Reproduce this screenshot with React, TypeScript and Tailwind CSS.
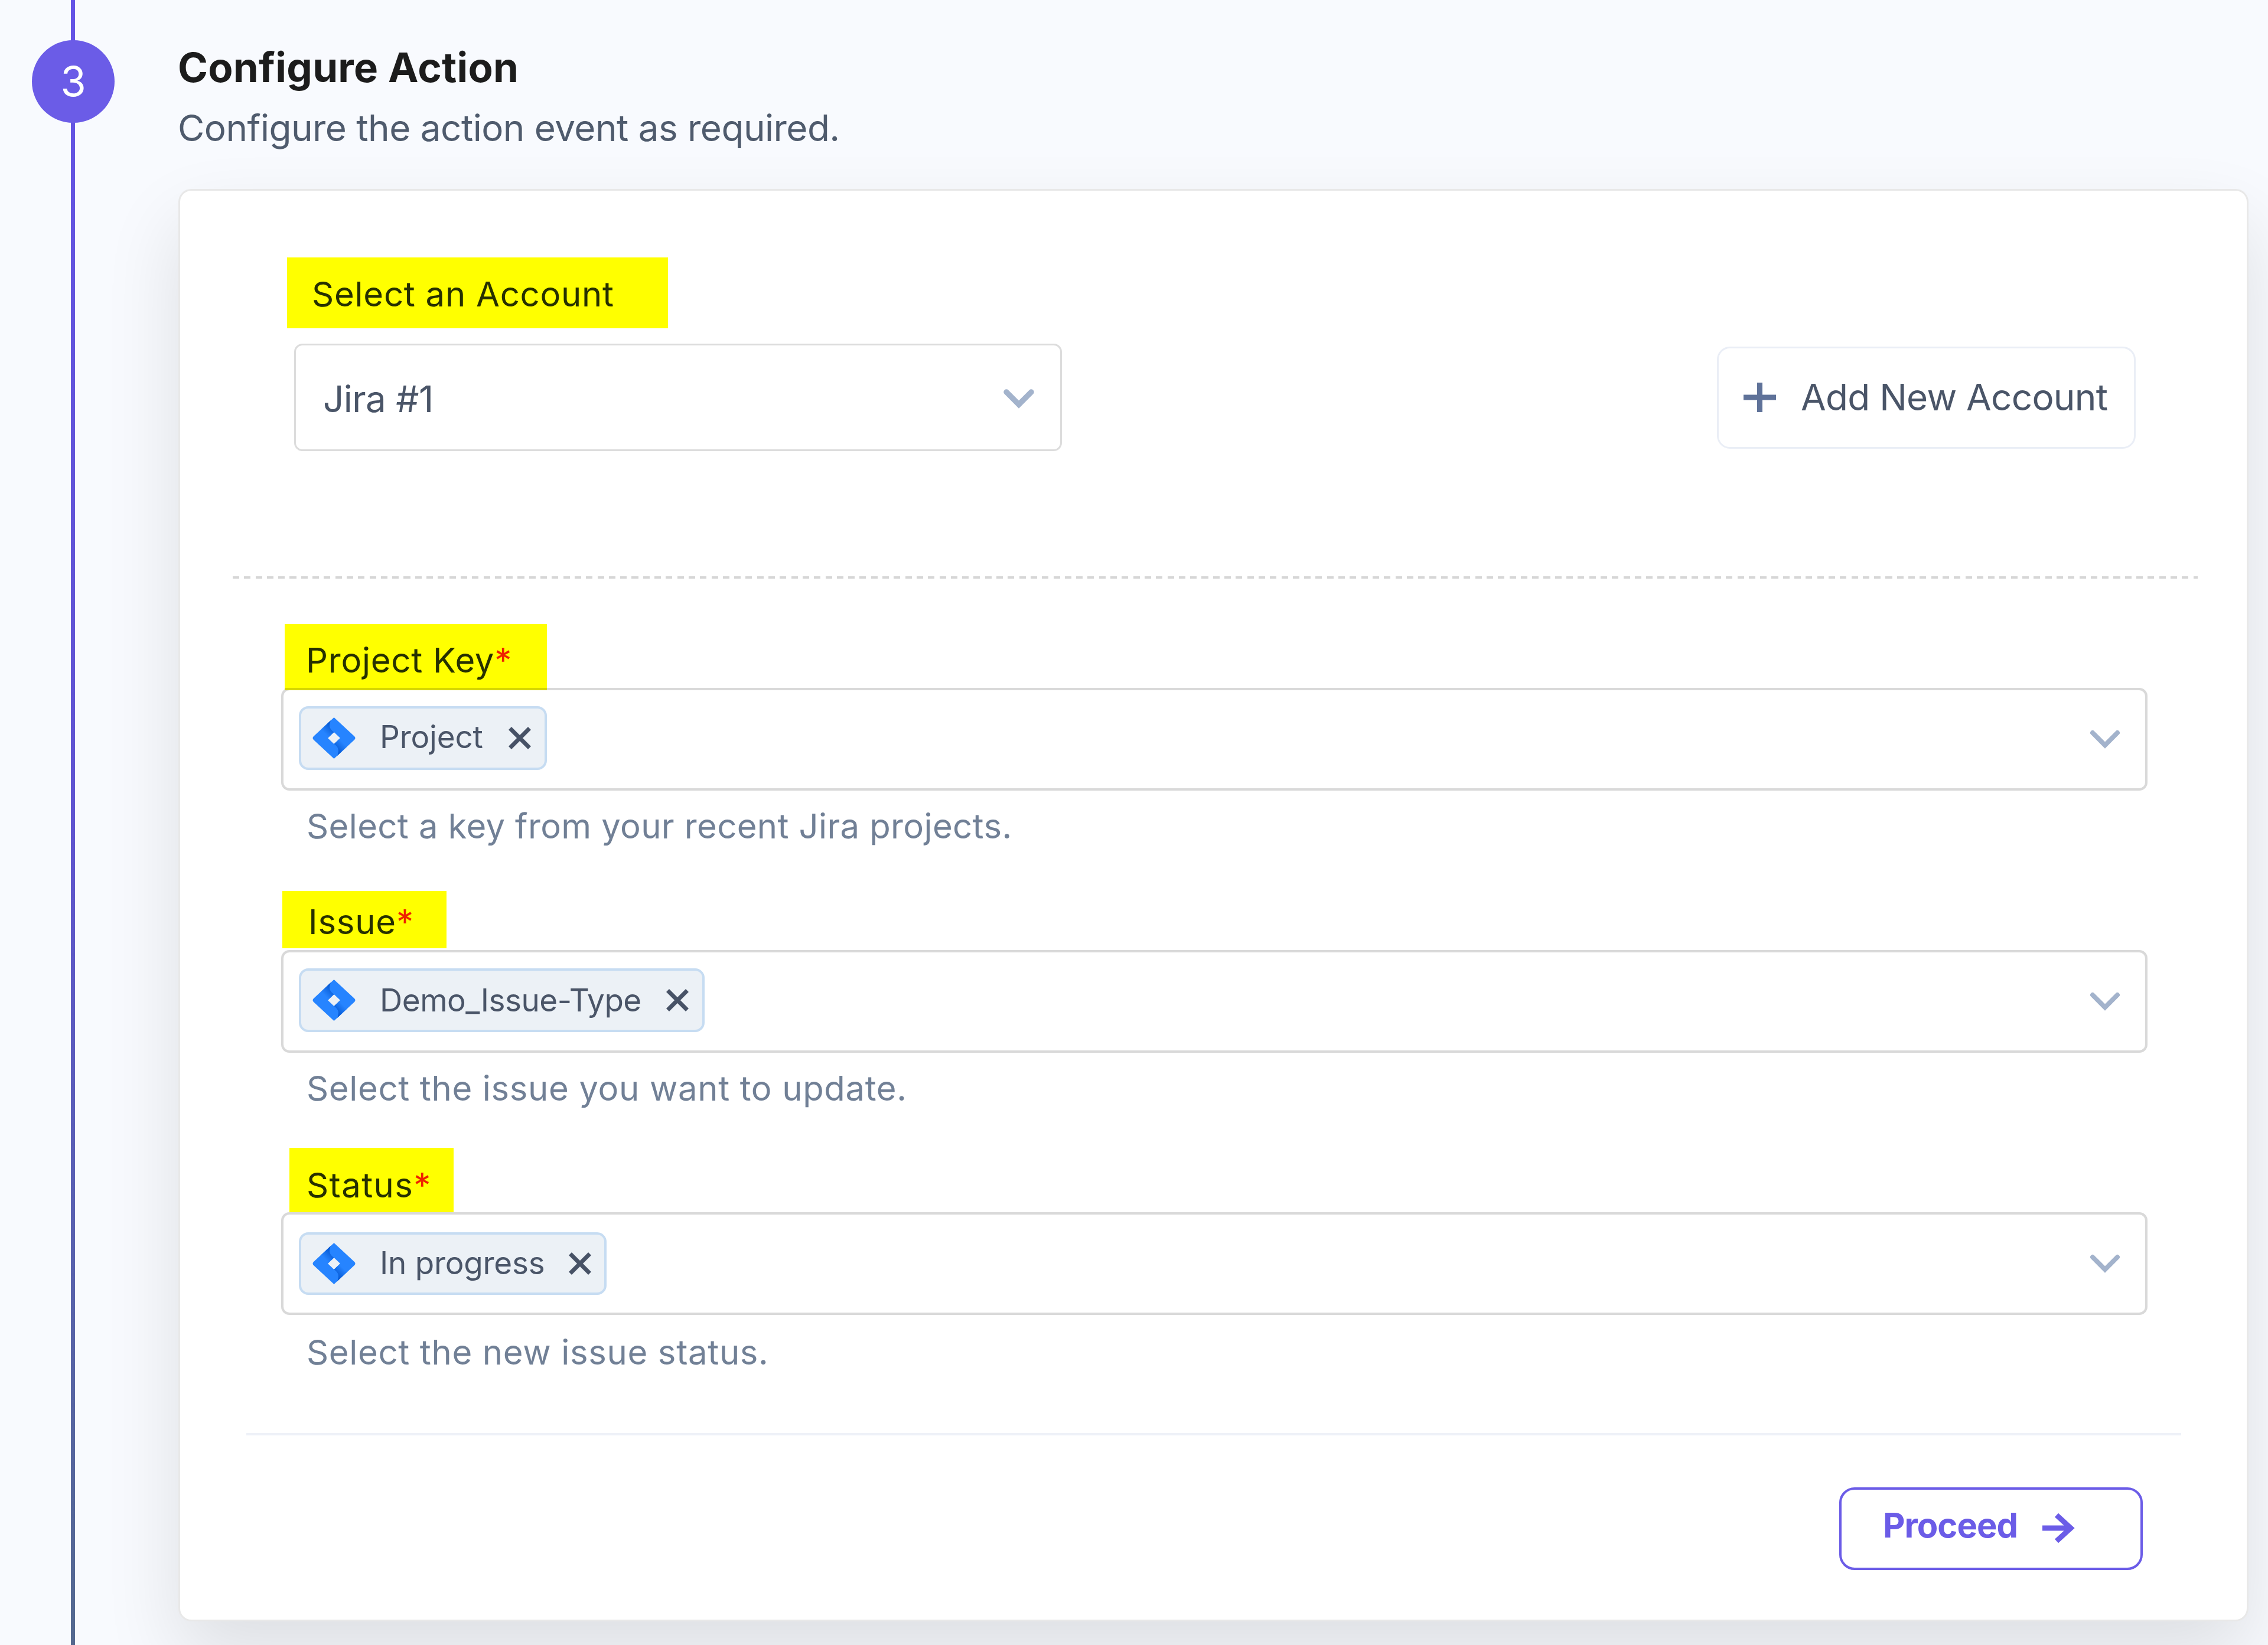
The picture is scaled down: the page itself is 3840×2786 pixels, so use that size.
import type { ReactNode } from 'react';

interface FieldProps {
  label: string;
  value: string;
  hint: string;
  className: string;
  labelClass: string;
  textClass: string;
  chipClass: string;
  valueClass: string;
  hintClass: string;
}

function ChevronDown({ strokeWidth = 8 }: { strokeWidth?: number }) {
  return (
    <svg className="h-[36px] w-[54px] shrink-0" viewBox="0 0 54 36" fill="none" stroke="#a3b3cc" strokeWidth={strokeWidth} strokeLinecap="round">
      <path d="M6 7 L27 28 L48 7" />
    </svg>
  );
}

function JiraLogo() {
  return (
    <svg className="h-[70px] w-[73px] shrink-0" viewBox="0 0 73 70">
      <defs>
        <linearGradient id="jiraTop" x1="36" y1="10" x2="20" y2="26" gradientUnits="userSpaceOnUse">
          <stop offset="0.1" stopColor="#0052cc" />
          <stop offset="1" stopColor="#2684ff" />
        </linearGradient>
        <linearGradient id="jiraBottom" x1="37" y1="60" x2="53" y2="44" gradientUnits="userSpaceOnUse">
          <stop offset="0.1" stopColor="#0052cc" />
          <stop offset="1" stopColor="#2684ff" />
        </linearGradient>
      </defs>
      <path fillRule="evenodd" fill="#2684ff" d="M36.5 0 L71 32 Q74 35 71 38 L36.5 70 L2 38 Q-1 35 2 32 Z M36.5 25 L26 35 L36.5 45 L47 35 Z" />
      <path fill="url(#jiraTop)" d="M36.5 25 C29 20 27 14 31 5 L14 21 L26 35 Z" />
      <path fill="url(#jiraBottom)" d="M36.5 45 C44 50 46 56 42 65 L59 49 L47 35 Z" />
    </svg>
  );
}

function CloseIcon() {
  return (
    <svg className="h-[40px] w-[40px] shrink-0" viewBox="0 0 40 40" fill="none" stroke="#475266" strokeWidth="7">
      <path d="M3.5 3.5 L36.5 36.5 M36.5 3.5 L3.5 36.5" />
    </svg>
  );
}

function Highlight({ className, children }: { className: string; children: ReactNode }) {
  return (
    <div className={`flex items-start whitespace-nowrap bg-[#ffff00] text-[58px] leading-[60px] text-[#263000] ${className}`}>
      {children}
    </div>
  );
}

function Field({ label, value, hint, className, labelClass, textClass, chipClass, valueClass, hintClass }: FieldProps) {
  return (
    <div className={`flex flex-col ${className}`}>
      <Highlight className={labelClass}>
        <span className={textClass}>
          {label}
          <span className="text-[#ee2200]">*</span>
        </span>
      </Highlight>
      <div className="flex h-[174px] w-[3160px] shrink-0 items-start justify-between rounded-[14px] border-[4px] border-[#d9d9d9] pl-[26px] pr-[41px]">
        <div className={`flex items-center rounded-[16px] border-[4px] border-[#c6dcf2] bg-[#ecf1f6] pl-[19px] ${chipClass}`}>
          <JiraLogo />
          <span className={`ml-[41px] flex-1 whitespace-nowrap text-[53px] leading-[60px] text-[#4a5568] ${valueClass}`}>{value}</span>
          <CloseIcon />
        </div>
        <div className="flex h-full items-center">
          <ChevronDown />
        </div>
      </div>
      <p className={`pl-[43px] text-[58px] leading-[60px] text-[#718096] ${hintClass}`}>{hint}</p>
    </div>
  );
}

export default function App() {
  return (
    <div className="flex h-[2786px] w-[3840px] overflow-hidden bg-[#f8fafe] font-[Inter,sans-serif]">
      <div className="relative flex w-[302px] shrink-0 flex-col pl-[120px]">
        <div className="h-full w-[7px] bg-linear-to-b from-[#6554e6] via-[#6054d0] to-[#54698f]" />
        <div className="absolute left-[54px] top-[68px] flex h-[140px] w-[140px] items-center justify-center rounded-full bg-[#6b5ce7] pb-[2px] text-[70px] text-white">
          3
        </div>
      </div>

      <div className="flex w-[3505px] shrink-0 flex-col">
        <h1 className="-ml-px mt-[74px] whitespace-nowrap text-[69px] font-bold leading-[80px] tracking-[0.25px] text-[#1c1c1c]">Configure Action</h1>
        <p className="-ml-px mt-[23px] whitespace-nowrap text-[62px] leading-[80px] tracking-[-0.53px] text-[#4f5b6d]">Configure the action event as required.</p>

        <div className="mt-[63px] flex h-[2426px] shrink-0 flex-col rounded-[22px] border-[3px] border-[#e8e8e8] bg-white shadow-[0_58px_130px_rgba(0,0,0,0.11)]">
          <div className="ml-[181px] mt-[113px] flex h-[328px] w-[3130px] items-start justify-between">
            <div className="flex flex-col">
              <Highlight className="h-[120px] w-[645px] pl-[42px] pt-[32px] tracking-[0.75px]">Select an Account</Highlight>
              <div className="ml-[12px] mt-[26px] flex h-[182px] w-[1300px] items-center justify-between rounded-[14px] border-[3px] border-[#dcdcdc] pl-[46px] pr-[43px] pt-[4px] text-[62px] tracking-[-0.55px] text-[#4a5568]">
                Jira #1
                <ChevronDown strokeWidth={9.5} />
              </div>
            </div>
            <button className="mt-[151px] flex h-[173px] w-[709px] items-center rounded-[22px] border-[3px] border-[#eaeef6] pb-[2px] pl-[42px] text-[62px] tracking-[-0.75px] text-[#4a5568]">
              <svg className="h-[50px] w-[55px]" viewBox="0 0 55 50" stroke="#5f7299" strokeWidth="9">
                <path d="M0 25 H55 M27.5 0 V50" />
              </svg>
              <span className="ml-[42px] whitespace-nowrap">Add New Account</span>
            </button>
          </div>

          <div className="ml-[89px] mt-[212px] h-[4px] w-[3327px] shrink-0 bg-[repeating-linear-gradient(90deg,#d6d6d6_0_11px,transparent_11px_19.3px)]" />

          <div className="ml-[171px] flex flex-col">
            <Field
              label="Project Key"
              value="Project"
              hint="Select a key from your recent Jira projects."
              className="mt-[77px]"
              labelClass="relative z-10 ml-[6px] h-[112px] w-[444px] pl-[36px] pt-[31px] -mb-[4px] border-b-[4px] border-[#d6d600]"
              textClass="tracking-[0.75px]"
              chipClass="mt-[27px] h-[108px] w-[420px] pr-[22px]"
              valueClass="-mt-[5px] tracking-[-0.2px]"
              hintClass="mt-[30px] tracking-[0.37px]"
            />
            <Field
              label="Issue"
              value="Demo_Issue-Type"
              hint="Select the issue you want to update."
              className="mt-[80px]"
              labelClass="ml-[2px] mb-[3px] h-[97px] w-[278px] pl-[44px] pt-[22px]"
              textClass="tracking-[0.8px]"
              chipClass="mt-[27px] h-[108px] w-[687px] pr-[22px]"
              valueClass="tracking-[-0.5px]"
              hintClass="mt-[30px] tracking-[0.65px]"
            />
            <Field
              label="Status"
              value="In progress"
              hint="Select the new issue status."
              className="mt-[71px]"
              labelClass="ml-[14px] h-[109px] w-[278px] pl-[29px] pt-[33px]"
              textClass="tracking-[1.4px]"
              chipClass="mt-[30px] h-[106px] w-[521px] pr-[21px]"
              valueClass="-mt-[3px] tracking-[-0.25px]"
              hintClass="mt-[33px] tracking-[0.65px]"
            />
          </div>

          <div className="ml-[112px] mt-[107px] h-[4px] w-[3276px] shrink-0 bg-[#eef1f8]" />

          <button className="ml-[2809px] mt-[88px] flex h-[140px] w-[514px] shrink-0 items-center rounded-[26px] border-[4px] border-[#6b5ce7] pl-[70px] text-[58px] font-bold tracking-[-1px] text-[#6b5ce7]">
            <span className="-mt-[11px] w-[270px] text-left">Proceed</span>
            <svg className="-mt-[2px] h-[52px] w-[56px]" viewBox="0 0 56 52" fill="none" stroke="currentColor" strokeWidth="9">
              <path d="M0 26 H49 M24 4 L48 26 L24 48" />
            </svg>
          </button>
        </div>
      </div>
    </div>
  );
}
